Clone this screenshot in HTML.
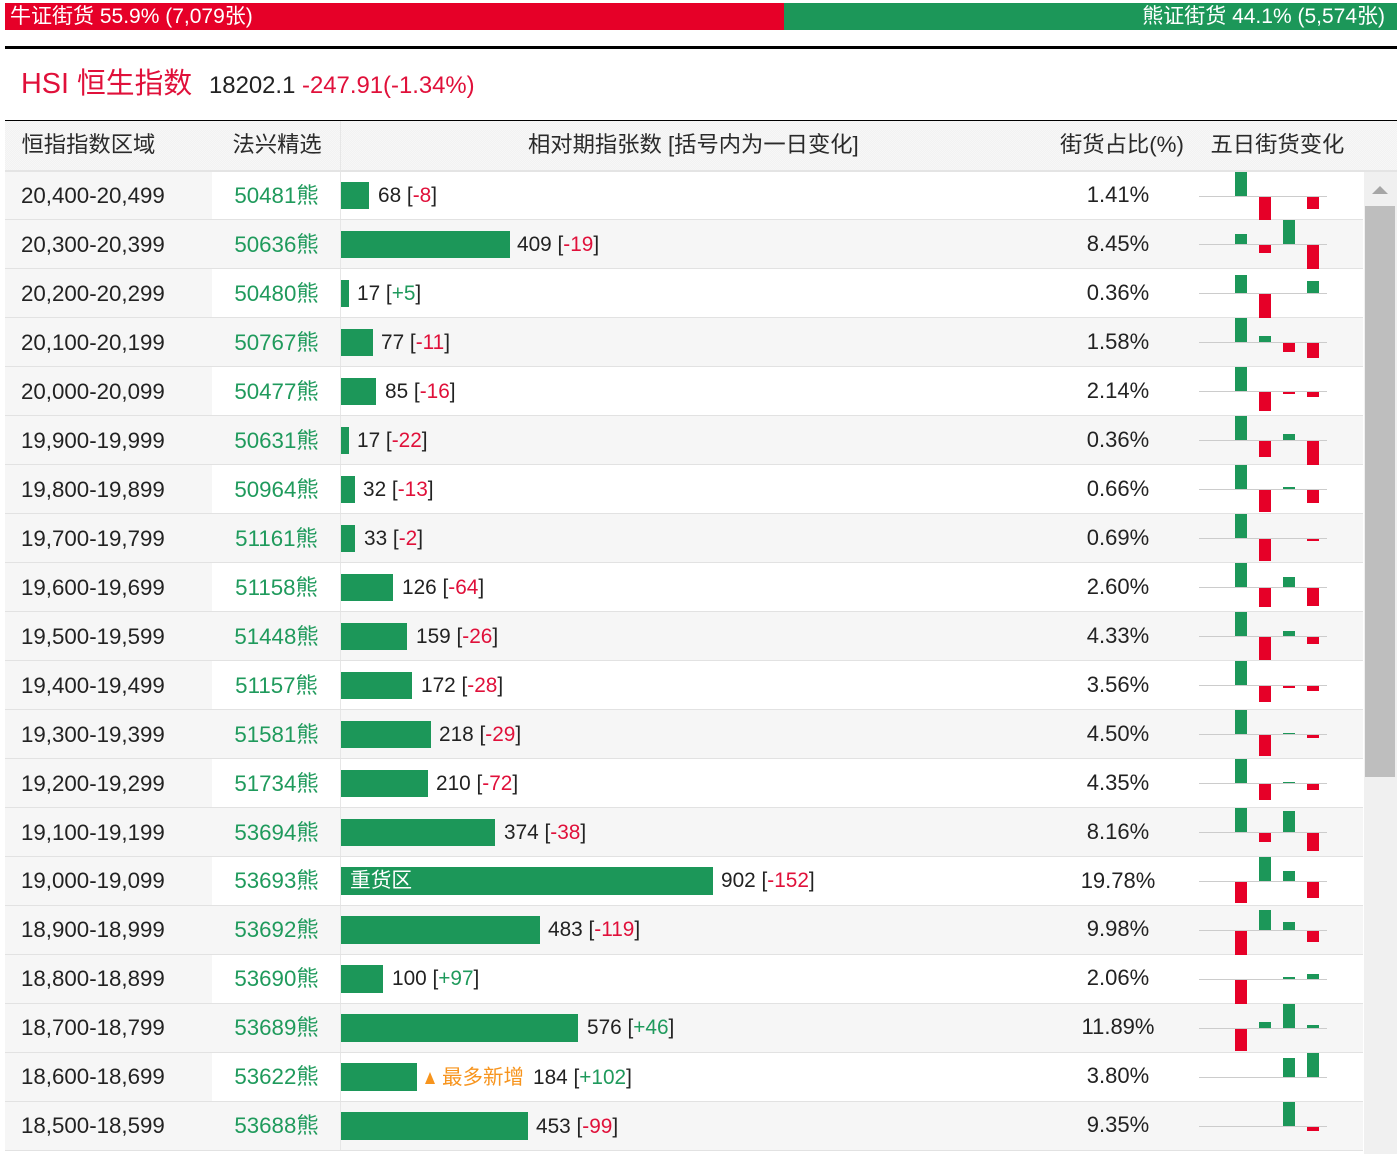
<!DOCTYPE html>
<html lang="zh">
<head>
<meta charset="utf-8">
<title>HSI 恒生指数</title>
<style>
html,body{margin:0;padding:0;background:#fff}
body{width:1400px;height:1154px;position:relative;overflow:hidden;font-family:"Liberation Sans","Noto Sans CJK SC",sans-serif;color:#222}
.a{position:absolute;white-space:nowrap}
.red{color:#e0103a}.grn{color:#1f9a5c}
.r{position:absolute;left:5px;width:1358px;height:48px;border-bottom:1px solid #e2e2e2;background:#fff}
.r.e{background:#f6f6f6}
.r>*{position:absolute;white-space:nowrap;line-height:48px}
.l{left:0;top:0;width:207px;height:48px;background:#f6f6f6;font-size:22.3px;text-indent:16px}
.n{left:207px;top:0;width:128px;height:48px;font-size:22.3px;color:#1f9a5c;text-align:center;border-right:1px solid #e6e6e6;text-indent:1px}
.b{left:336px;top:11px;height:27px;background:#1c9759}
.w .b{top:10px;height:28px}
.v{top:0;font-size:20.8px}
.p{left:1013px;width:200px;top:0;text-align:center;font-size:22px}
.s>.l,.s>.n,.s>.v{line-height:50px}
.w>.p{line-height:46px}
.c{left:1194px;top:24px;width:128px;height:1px;background:#ccc}
.f{top:25px}
.c i{position:absolute;width:12px;display:block}
.u{bottom:1px;background:#1c9759}
.d{top:1px;background:#e60028}
.a1{left:36px}.a2{left:60px}.a3{left:84px}.a4{left:108px}
.h{top:121px;line-height:47px;font-size:22.3px;color:#2a2a2a}
</style>
</head>
<body>
<div class="a" style="left:5px;top:3px;width:779px;height:27px;background:#e60028"></div>
<div class="a" style="left:784px;top:3px;width:613px;height:27px;background:#1c9759"></div>
<div class="a" style="left:10px;top:3px;line-height:28px;font-size:21px;color:#fff">牛证街货 55.9% (7,079张)</div>
<div class="a" style="right:15px;top:3px;line-height:28px;font-size:21px;color:#fff">熊证街货 44.1% (5,574张)</div>
<div class="a" style="left:5px;top:46px;width:1392px;height:3px;background:#000"></div>

<div class="a red" style="left:21px;top:63px;line-height:42px;font-size:28.8px">HSI 恒生指数</div>
<div class="a" style="left:209px;top:65px;line-height:42px;font-size:23.9px"><span style="color:#222">18202.1</span> <span class="red">-247.91(-1.34%)</span></div>

<div class="a" style="left:5px;top:120px;width:1392px;height:1px;background:#000"></div>
<div class="a" style="left:5px;top:121px;width:1392px;height:49px;background:repeating-conic-gradient(#f2f2f2 0 25%,#f7f7f7 0 50%) 0 0/2px 2px"></div>
<div class="a" style="left:340px;top:121px;width:1px;height:49px;background:#e6e6e6"></div>
<div class="a h" style="left:21.5px">恒指指数区域</div>
<div class="a h" style="left:232.5px">法兴精选</div>
<div class="a h" style="left:528px">相对期指张数 [括号内为一日变化]</div>
<div class="a h" style="left:1060px">街货占比(%)</div>
<div class="a h" style="left:1210.5px">五日街货变化</div>

<div class="r s" style="top:171px"><div class="l">20,400-20,499</div><div class="n">50481熊</div><div class="b" style="width:28px"></div><div class="v" style="left:373px">68 [<span class="red">-8</span>]</div><div class="p">1.41%</div><div class="c f"><i class="u a1" style="height:24px"></i><i class="d a2" style="height:23px"></i><i class="d a4" style="height:12px"></i></div></div>
<div class="r e s" style="top:220px"><div class="l">20,300-20,399</div><div class="n">50636熊</div><div class="b" style="width:169px"></div><div class="v" style="left:512px">409 [<span class="red">-19</span>]</div><div class="p">8.45%</div><div class="c"><i class="u a1" style="height:10px"></i><i class="d a2" style="height:8px"></i><i class="u a3" style="height:24px"></i><i class="d a4" style="height:24px"></i></div></div>
<div class="r s" style="top:269px"><div class="l">20,200-20,299</div><div class="n">50480熊</div><div class="b" style="width:8px"></div><div class="v" style="left:352px">17 [<span class="grn">+5</span>]</div><div class="p">0.36%</div><div class="c"><i class="u a1" style="height:18px"></i><i class="d a2" style="height:24px"></i><i class="u a4" style="height:12px"></i></div></div>
<div class="r e s" style="top:318px"><div class="l">20,100-20,199</div><div class="n">50767熊</div><div class="b" style="width:32px"></div><div class="v" style="left:376px">77 [<span class="red">-11</span>]</div><div class="p">1.58%</div><div class="c"><i class="u a1" style="height:24px"></i><i class="u a2" style="height:6px"></i><i class="d a3" style="height:9px"></i><i class="d a4" style="height:15px"></i></div></div>
<div class="r s" style="top:367px"><div class="l">20,000-20,099</div><div class="n">50477熊</div><div class="b" style="width:35px"></div><div class="v" style="left:380px">85 [<span class="red">-16</span>]</div><div class="p">2.14%</div><div class="c"><i class="u a1" style="height:24px"></i><i class="d a2" style="height:19px"></i><i class="d a3" style="height:2px"></i><i class="d a4" style="height:5px"></i></div></div>
<div class="r e s" style="top:416px"><div class="l">19,900-19,999</div><div class="n">50631熊</div><div class="b" style="width:8px"></div><div class="v" style="left:352px">17 [<span class="red">-22</span>]</div><div class="p">0.36%</div><div class="c"><i class="u a1" style="height:24px"></i><i class="d a2" style="height:16px"></i><i class="u a3" style="height:6px"></i><i class="d a4" style="height:24px"></i></div></div>
<div class="r s" style="top:465px"><div class="l">19,800-19,899</div><div class="n">50964熊</div><div class="b" style="width:14px"></div><div class="v" style="left:358px">32 [<span class="red">-13</span>]</div><div class="p">0.66%</div><div class="c"><i class="u a1" style="height:24px"></i><i class="d a2" style="height:22px"></i><i class="u a3" style="height:2px"></i><i class="d a4" style="height:13px"></i></div></div>
<div class="r e s" style="top:514px"><div class="l">19,700-19,799</div><div class="n">51161熊</div><div class="b" style="width:14px"></div><div class="v" style="left:359px">33 [<span class="red">-2</span>]</div><div class="p">0.69%</div><div class="c"><i class="u a1" style="height:24px"></i><i class="d a2" style="height:22px"></i><i class="d a4" style="height:2px"></i></div></div>
<div class="r s" style="top:563px"><div class="l">19,600-19,699</div><div class="n">51158熊</div><div class="b" style="width:52px"></div><div class="v" style="left:397px">126 [<span class="red">-64</span>]</div><div class="p">2.60%</div><div class="c"><i class="u a1" style="height:24px"></i><i class="d a2" style="height:19px"></i><i class="u a3" style="height:10px"></i><i class="d a4" style="height:18px"></i></div></div>
<div class="r e s" style="top:612px"><div class="l">19,500-19,599</div><div class="n">51448熊</div><div class="b" style="width:66px"></div><div class="v" style="left:411px">159 [<span class="red">-26</span>]</div><div class="p">4.33%</div><div class="c"><i class="u a1" style="height:24px"></i><i class="d a2" style="height:23px"></i><i class="u a3" style="height:5px"></i><i class="d a4" style="height:7px"></i></div></div>
<div class="r s" style="top:661px"><div class="l">19,400-19,499</div><div class="n">51157熊</div><div class="b" style="width:71px"></div><div class="v" style="left:416px">172 [<span class="red">-28</span>]</div><div class="p">3.56%</div><div class="c"><i class="u a1" style="height:24px"></i><i class="d a2" style="height:16px"></i><i class="d a3" style="height:2px"></i><i class="d a4" style="height:5px"></i></div></div>
<div class="r e s" style="top:710px"><div class="l">19,300-19,399</div><div class="n">51581熊</div><div class="b" style="width:90px"></div><div class="v" style="left:434px">218 [<span class="red">-29</span>]</div><div class="p">4.50%</div><div class="c"><i class="u a1" style="height:24px"></i><i class="d a2" style="height:21px"></i><i class="u a3" style="height:1px"></i><i class="d a4" style="height:3px"></i></div></div>
<div class="r s" style="top:759px"><div class="l">19,200-19,299</div><div class="n">51734熊</div><div class="b" style="width:87px"></div><div class="v" style="left:431px">210 [<span class="red">-72</span>]</div><div class="p">4.35%</div><div class="c"><i class="u a1" style="height:24px"></i><i class="d a2" style="height:16px"></i><i class="u a3" style="height:1px"></i><i class="d a4" style="height:6px"></i></div></div>
<div class="r e s" style="top:808px"><div class="l">19,100-19,199</div><div class="n">53694熊</div><div class="b" style="width:154px"></div><div class="v" style="left:499px">374 [<span class="red">-38</span>]</div><div class="p">8.16%</div><div class="c"><i class="u a1" style="height:24px"></i><i class="d a2" style="height:9px"></i><i class="u a3" style="height:21px"></i><i class="d a4" style="height:18px"></i></div></div>
<div class="r" style="top:857px"><div class="l" style="line-height:47px">19,000-19,099</div><div class="n" style="line-height:47px">53693熊</div><div class="b" style="top:10px;width:372px;height:28px;line-height:28px;color:#fff;font-size:20.7px;text-indent:9px">重货区</div><div class="v" style="left:716px;line-height:47px">902 [<span class="red">-152</span>]</div><div class="p" style="line-height:47px">19.78%</div><div class="c"><i class="d a1" style="height:21px"></i><i class="u a2" style="height:24px"></i><i class="u a3" style="height:10px"></i><i class="d a4" style="height:16px"></i></div></div>
<div class="r e w" style="top:906px"><div class="l">18,900-18,999</div><div class="n">53692熊</div><div class="b" style="width:199px"></div><div class="v" style="left:543px">483 [<span class="red">-119</span>]</div><div class="p">9.98%</div><div class="c"><i class="d a1" style="height:24px"></i><i class="u a2" style="height:20px"></i><i class="u a3" style="height:8px"></i><i class="d a4" style="height:11px"></i></div></div>
<div class="r w" style="top:955px"><div class="l">18,800-18,899</div><div class="n">53690熊</div><div class="b" style="width:42px"></div><div class="v" style="left:387px">100 [<span class="grn">+97</span>]</div><div class="p">2.06%</div><div class="c"><i class="d a1" style="height:24px"></i><i class="u a3" style="height:2px"></i><i class="u a4" style="height:5px"></i></div></div>
<div class="r e w" style="top:1004px"><div class="l">18,700-18,799</div><div class="n">53689熊</div><div class="b" style="width:237px"></div><div class="v" style="left:582px">576 [<span class="grn">+46</span>]</div><div class="p">11.89%</div><div class="c"><i class="d a1" style="height:22px"></i><i class="u a2" style="height:6px"></i><i class="u a3" style="height:24px"></i><i class="u a4" style="height:3px"></i></div></div>
<div class="r w" style="top:1053px"><div class="l">18,600-18,699</div><div class="n">53622熊</div><div class="b" style="width:76px"></div><div style="left:420px;top:19px;width:0;height:0;border-left:5.5px solid transparent;border-right:5.5px solid transparent;border-bottom:12px solid #f7941d"></div><div class="v" style="left:437px;font-size:20.5px;color:#f7941d;line-height:50px">最多新增</div><div class="v" style="left:528px;line-height:50px">184 [<span class="grn">+102</span>]</div><div class="p">3.80%</div><div class="c"><i class="u a3" style="height:19px"></i><i class="u a4" style="height:24px"></i></div></div>
<div class="r e w" style="top:1102px"><div class="l">18,500-18,599</div><div class="n">53688熊</div><div class="b" style="width:187px"></div><div class="v" style="left:531px;line-height:50px">453 [<span class="red">-99</span>]</div><div class="p">9.35%</div><div class="c"><i class="u a3" style="height:24px"></i><i class="d a4" style="height:4px"></i></div></div>

<div class="a" style="left:5px;top:170px;width:1392px;height:2px;background:#e4e4e4"></div>
<div class="a" style="left:1364px;top:172px;width:33px;height:982px;background:#f0f0f0"></div>
<div class="a" style="left:1372px;top:186px;width:0;height:0;border-left:8px solid transparent;border-right:8px solid transparent;border-bottom:8px solid #a6a6a6"></div>
<div class="a" style="left:1365px;top:206px;width:30px;height:571px;background:#bebebe"></div>
</body>
</html>
